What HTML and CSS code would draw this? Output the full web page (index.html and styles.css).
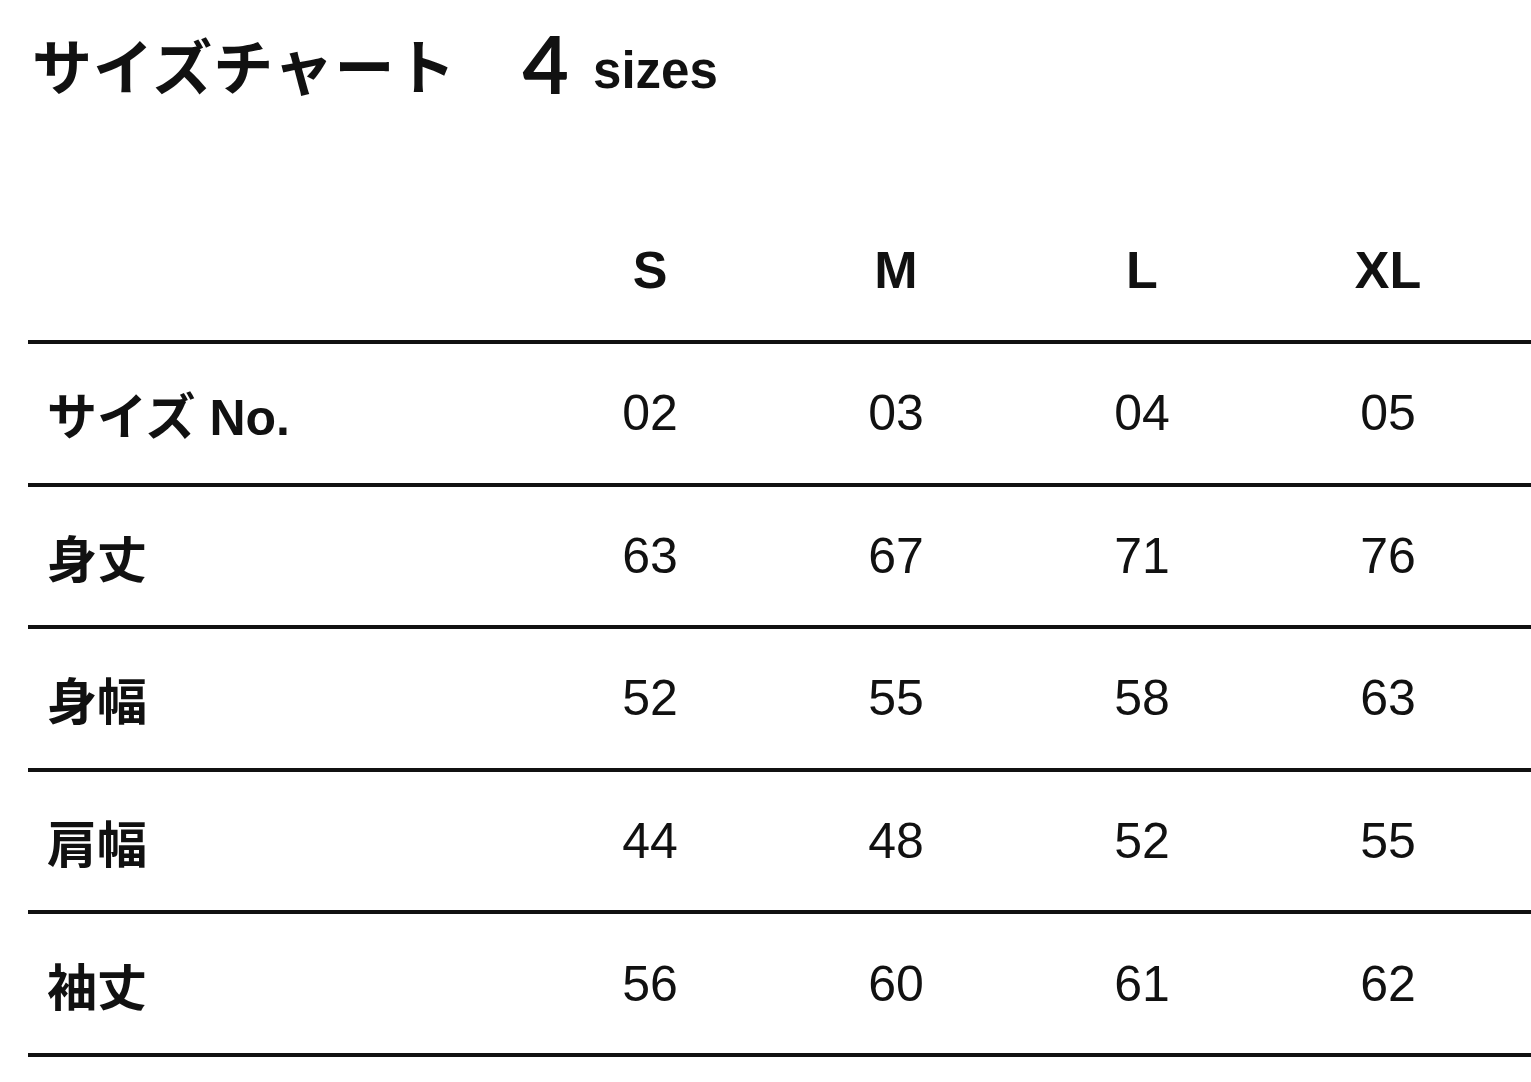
FILE: index.html
```html
<!DOCTYPE html>
<html lang="ja">
<head>
<meta charset="utf-8">
<link rel="stylesheet" href="styles.css">
</head>
<body>
<div class="page">
  <h1 class="title"><span class="title-ja">サイズチャート</span><span class="title-num">4</span><span class="title-en">sizes</span></h1>
  <div class="chart">
    <div class="row head">
      <div class="label"></div>
      <div class="cell">S</div>
      <div class="cell">M</div>
      <div class="cell">L</div>
      <div class="cell">XL</div>
    </div>
    <div class="row">
      <div class="label">サイズ No.</div>
      <div class="cell">02</div><div class="cell">03</div><div class="cell">04</div><div class="cell">05</div>
    </div>
    <div class="row">
      <div class="label">身丈</div>
      <div class="cell">63</div><div class="cell">67</div><div class="cell">71</div><div class="cell">76</div>
    </div>
    <div class="row">
      <div class="label">身幅</div>
      <div class="cell">52</div><div class="cell">55</div><div class="cell">58</div><div class="cell">63</div>
    </div>
    <div class="row">
      <div class="label">肩幅</div>
      <div class="cell">44</div><div class="cell">48</div><div class="cell">52</div><div class="cell">55</div>
    </div>
    <div class="row">
      <div class="label">袖丈</div>
      <div class="cell">56</div><div class="cell">60</div><div class="cell">61</div><div class="cell">62</div>
    </div>
  </div>
</div>
</body>
</html>
```
FILE: styles.css
```css
html, body {
  margin: 0;
  padding: 0;
  background: #ffffff;
}
.page {
  padding: 0 0 0 28px;
  font-family: "Liberation Sans", "Noto Sans CJK JP", sans-serif;
  color: #111111;
}
.title {
  margin: 0;
  height: 130px;
  display: flex;
  align-items: baseline;
  line-height: 1;
}
.title-ja {
  font-family: "Noto Sans CJK JP", sans-serif;
  font-weight: 700;
  font-size: 60px;
  letter-spacing: 1px;
  padding-left: 4px;
  margin-top: 30px;
  transform: translateY(4px);
}
.title-num {
  font-family: "Lato", sans-serif;
  font-weight: 700;
  font-size: 80px;
  margin-left: 66px;
  transform: translateY(8px);
}
.title-en {
  font-family: "Liberation Sans", sans-serif;
  font-weight: 700;
  font-size: 51px;
  margin-left: 24px;
  transform: translateY(2px);
}
.chart {
  display: flex;
  flex-direction: column;
}
.row {
  display: grid;
  grid-template-columns: 499px repeat(4, 246px) 1fr;
  align-items: center;
  height: 142.6px;
  border-bottom: 4px solid #111111;
  box-sizing: border-box;
  font-size: 50px;
}
.row.head {
  align-items: start;
  height: 214px;
  padding-top: 110px;
}
.head .cell {
  font-weight: 700;
  font-size: 52px;
}
.label {
  padding-left: 19px;
  font-weight: 700;
  font-family: "Liberation Sans", "Noto Sans CJK JP", sans-serif;
}
.cell {
  text-align: center;
  font-weight: 400;
}
```
